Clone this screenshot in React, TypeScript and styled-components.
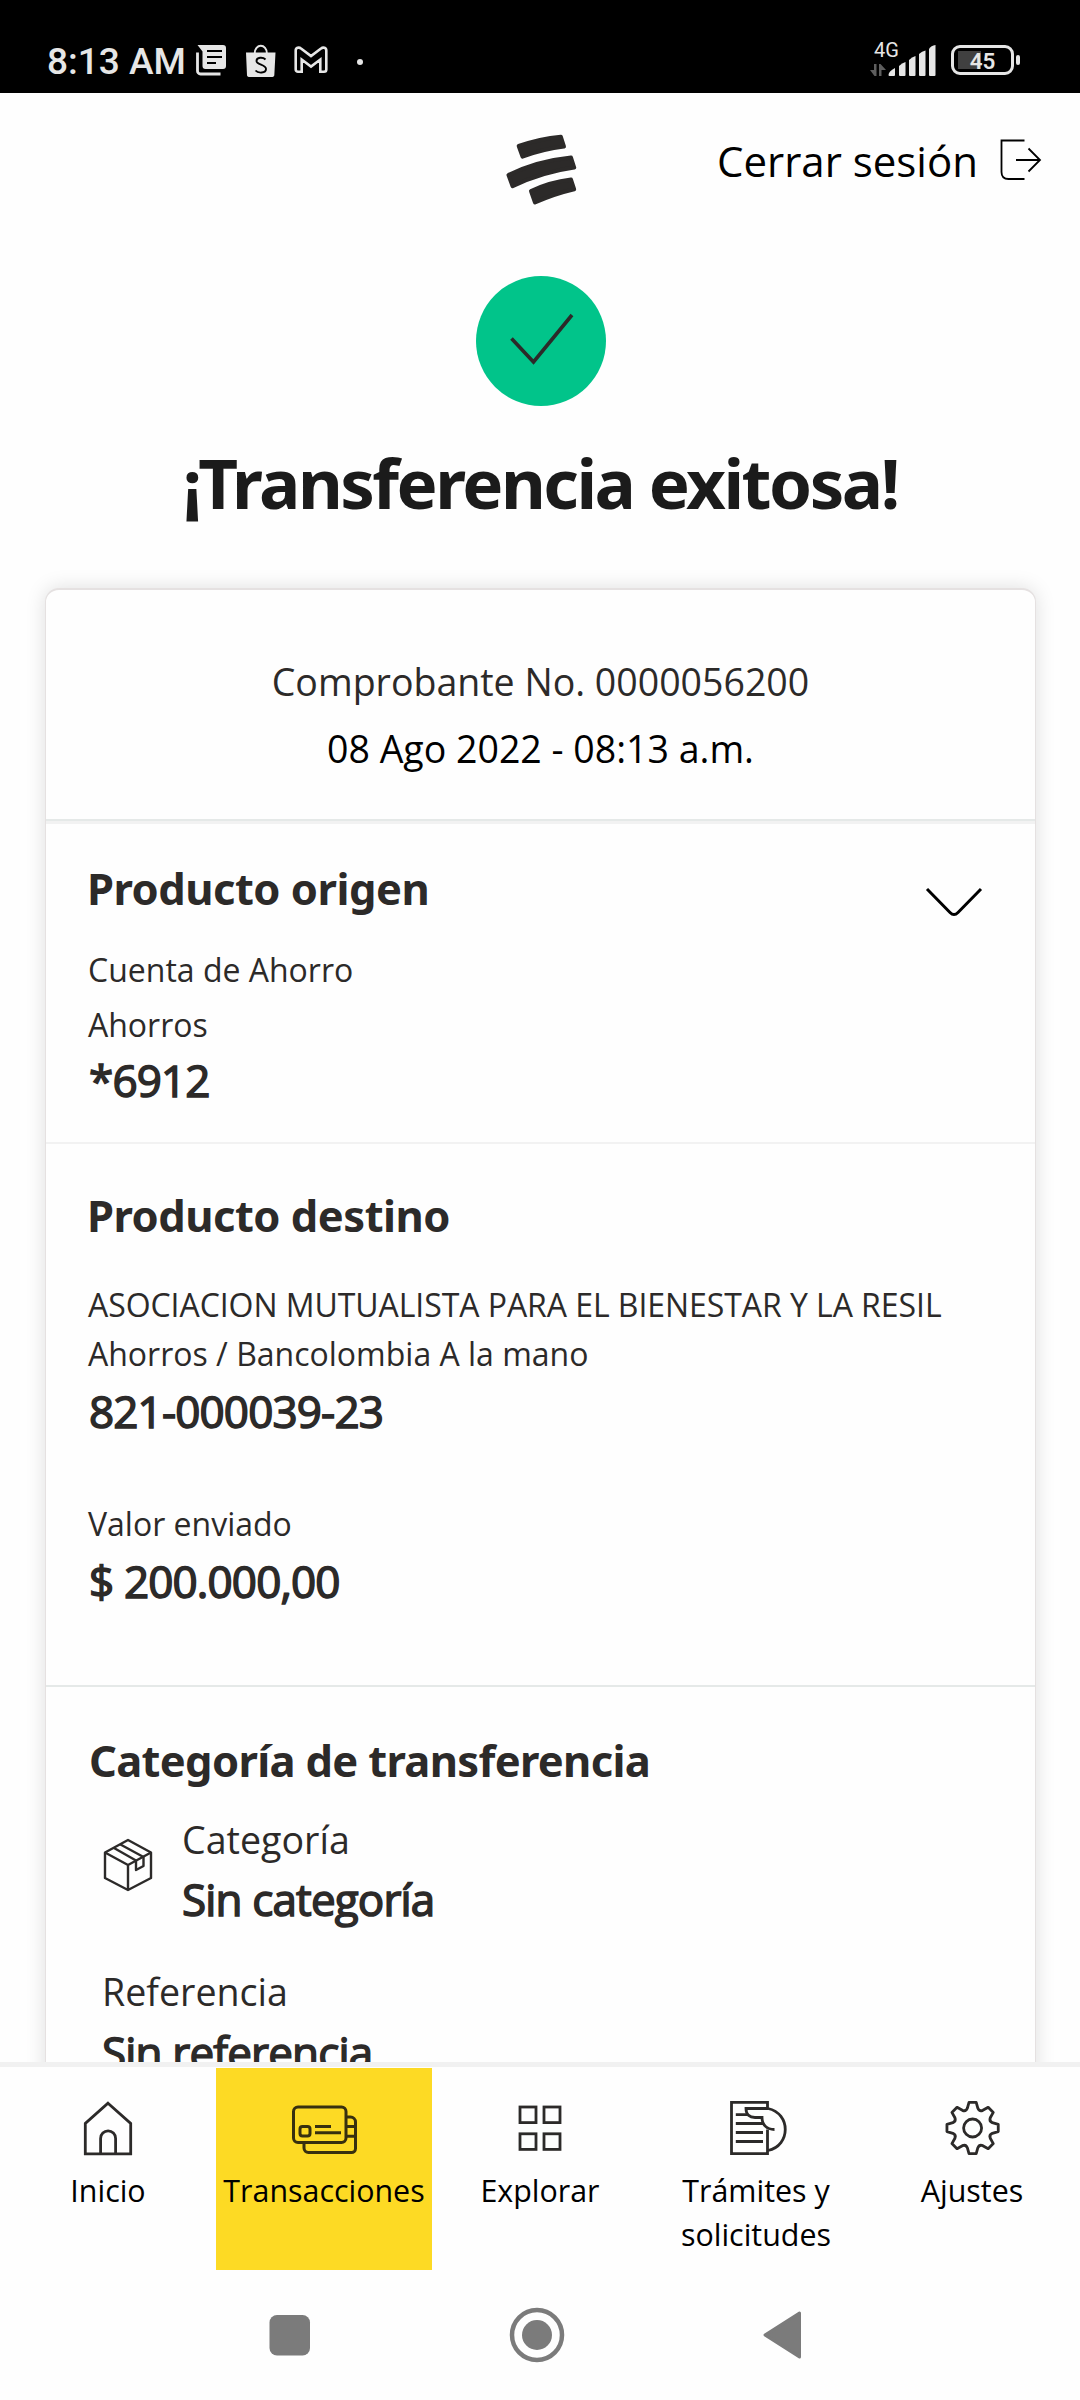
import React from "react";
import styled, { createGlobalStyle } from "styled-components";

const ink = "#2c2a29";
const statusInk = "#e6e6e6";

const GlobalStyle = createGlobalStyle`
  * { box-sizing: border-box; }
  body { margin: 0; background: #fefefe; }
`;

const Screen = styled.div`
  width: 1080px;
  height: 2400px;
  display: flex;
  flex-direction: column;
  overflow: hidden;
  background: #fefefe;
  color: ${ink};
  font-family: "Open Sans", "Noto Sans", sans-serif;
`;

/* Android status bar */
const StatusBar = styled.header`
  flex: none;
  height: 93px;
  padding: 0 60px 0 47px;
  display: flex;
  justify-content: space-between;
  background: #000;
  color: ${statusInk};
  font-family: Roboto, sans-serif;
`;

const StatusGroup = styled.div`
  display: flex;
  align-items: flex-start;
`;

const Clock = styled.span`
  width: 148px;
  margin-top: 40px;
  font-size: 37px;
  line-height: 44px;
  font-weight: 500;
  white-space: nowrap;
`;

const StatusIcon = styled.svg<{ $w: number; $h: number; $top: number; $left?: number }>`
  flex: none;
  display: block;
  width: ${(p) => p.$w}px;
  height: ${(p) => p.$h}px;
  margin: ${(p) => p.$top}px 0 0 ${(p) => p.$left ?? 0}px;
`;

const Network = styled.div`
  width: 34px;
  margin-top: 38px;
  display: flex;
  flex-direction: column;
`;

const NetworkLabel = styled.span`
  align-self: flex-start;
  margin-left: 4px;
  font-size: 20px;
  line-height: 24px;
`;

const Battery = styled.div`
  display: flex;
  align-items: center;
  gap: 2px;
  margin: 45px 0 0 14px;
`;

const BatteryBody = styled.div`
  width: 63px;
  height: 30px;
  border: 3px solid ${statusInk};
  border-radius: 9px;
  display: flex;
  align-items: center;
  justify-content: center;
  background: linear-gradient(#404040, #404040) 4px 3px / 23px 18px no-repeat;
  font-size: 22.5px;
  line-height: 24px;
  padding-top: 2px;
  font-weight: 600;
`;

const BatteryTip = styled.div`
  width: 4px;
  height: 10px;
  border-radius: 2px;
  background: ${statusInk};
`;

/* App header */
const Header = styled.div`
  flex: none;
  height: 150px;
  display: grid;
  grid-template-columns: 1fr 72px 1fr;
  align-items: start;
`;

const Logo = styled.svg`
  grid-column: 2;
  width: 72px;
  height: 72px;
  margin: 41px 0 0 2px;
`;

const Logout = styled.button`
  justify-self: end;
  display: flex;
  align-items: flex-start;
  gap: 22px;
  margin: 39px 38px 0 0;
  padding: 0;
  border: 0;
  background: none;
  color: #000;
  font: 42px/58px "Open Sans", sans-serif;
  white-space: nowrap;
`;

const LogoutIcon = styled.svg`
  width: 42px;
  height: 42px;
  margin-top: 7px;
`;

const Content = styled.main`
  flex: none;
  height: 1819px;
  overflow: hidden;
`;

const Hero = styled.section`
  display: flex;
  flex-direction: column;
  align-items: center;
  padding: 33px 0 61px;
`;

const SuccessBadge = styled.div`
  width: 130px;
  height: 130px;
  margin-left: 2px;
  border-radius: 50%;
  background: #01c48a;
`;

const HeroTitle = styled.h1`
  margin: 31px 0 0;
  color: #1b1b1b;
  font: 700 69px/90px "Noto Sans", sans-serif;
  letter-spacing: -2.5px;
  white-space: nowrap;
`;

/* Receipt */
const Card = styled.article`
  width: 991px;
  height: 1600px;
  margin-left: 45px;
  border: 1px solid #e5e1e1;
  border-top-width: 2px;
  border-radius: 14px;
  background: #fefefe;
  box-shadow: 0 0 20px rgba(0, 0, 0, 0.13);
`;

const CardHeader = styled.div`
  height: 231px;
  padding-top: 58px;
  border-bottom: 2px solid #e5e9e8;
  text-align: center;
  font-size: 37.5px;
  line-height: 67px;
`;

const ReceiptDate = styled.div`
  color: #000;
`;

const Section = styled.section<{ $top: number; $h: number; $line?: string }>`
  height: ${(p) => p.$h}px;
  padding: ${(p) => p.$top}px 42px 0;
  border-bottom: 2px solid ${(p) => p.$line ?? "transparent"};
`;

const OriginSection = styled(Section)`
  border-top: 3px solid #f2f2f2;
`;

const SectionHead = styled.div`
  display: flex;
  justify-content: space-between;
`;

const SectionTitle = styled.h2<{ $track?: number; $indent?: number }>`
  margin: 0 0 0 ${(p) => p.$indent ?? -1}px;
  font: 700 43.5px/60px "Noto Sans", sans-serif;
  letter-spacing: ${(p) => p.$track ?? -0.5}px;
  white-space: nowrap;
`;

const Chevron = styled.svg`
  width: 60px;
  height: 34px;
  margin: 27px 10px 0 0;
`;

const Detail = styled.div<{ $lh?: number; $mt?: number; $track?: number }>`
  margin-top: ${(p) => p.$mt ?? 0}px;
  font-size: 32px;
  line-height: ${(p) => p.$lh ?? 55}px;
  letter-spacing: ${(p) => p.$track ?? 0}px;
  white-space: nowrap;
`;

const Value = styled.div<{ $mt?: number }>`
  margin-top: ${(p) => p.$mt ?? 0}px;
  padding-left: 1px;
  font-size: 44px;
  line-height: 58px;
  letter-spacing: -0.85px;
  -webkit-text-stroke: 1.5px ${ink};
  white-space: nowrap;
`;

const FieldLabel = styled.div`
  padding-left: 1px;
  font-size: 37.6px;
  line-height: 60px;
`;

const CategoryRow = styled.div`
  display: flex;
  gap: 28px;
  margin: 20px 0 34px;
  padding-left: 15px;
`;

const BoxIcon = styled.svg`
  width: 50px;
  height: 54px;
  margin-top: 28px;
`;

const ReferenceField = styled.div`
  padding-left: 13px;
`;

/* Tab bar */
const TabBar = styled.nav`
  flex: none;
  height: 208px;
  display: grid;
  grid-template-columns: repeat(5, 216px);
  border-top: 5px solid #f1f1f1;
  padding-top: 1px;
`;

const Tab = styled.a<{ $active?: boolean }>`
  display: flex;
  flex-direction: column;
  align-items: center;
  padding-top: 32px;
  background: ${(p) => (p.$active ? "#fdda24" : "transparent")};
  color: #000;
  font-size: 30.4px;
  line-height: 44px;
  text-align: center;
`;

const TabIcon = styled.svg`
  width: 72px;
  height: 56px;
  margin-bottom: 13px;
  fill: none;
  stroke: ${ink};
  stroke-width: 2.8;
`;

const SystemNav = styled.footer`
  flex: none;
  height: 130px;
  display: grid;
  grid-template-columns: 42px 56px 40px;
  column-gap: 198px;
  align-items: center;
  padding-left: 269px;
`;

const SystemIcon = styled.svg`
  width: 100%;
  height: 56px;
  fill: #7b7b7b;
`;

function gearPath(cx: number, cy: number) {
  const at = (r: number, deg: number) => {
    const a = (deg * Math.PI) / 180;
    return `${(cx + r * Math.sin(a)).toFixed(2)} ${(cy - r * Math.cos(a)).toFixed(2)}`;
  };
  let d = "";
  for (let k = 0; k < 8; k++) {
    const a = k * 45;
    d += `${k ? "L" : "M"}${at(25.9, a - 8)} L${at(25.9, a + 8)} L${at(20.4, a + 15)} Q${at(17.6, a + 22.5)} ${at(20.4, a + 30)} `;
  }
  return d + "Z";
}

const tabs = [
  {
    label: "Inicio",
    icon: (
      <>
        <path d="M36 3.2 58.7 23.5V53.8H13.3V23.5Z" />
        <path d="M28.6 53.8V38.4a7.5 7.5 0 0 1 15 0V53.8" />
      </>
    ),
  },
  {
    label: "Transacciones",
    active: true,
    icon: (
      <g stroke="#38300f" strokeWidth="3">
        <rect x="5.5" y="7" width="52.5" height="35.5" rx="4.5" />
        <path d="M58 17h4.5a5 5 0 0 1 5 5v26.5a4 4 0 0 1-4 4H20.5a4.5 4.5 0 0 1-4.5-4.5V43" />
        <path d="M58 26.5h9M58 36.3h9" />
        <rect x="12" y="26.4" width="10" height="9.7" rx="2.5" />
        <path d="M27 26.5h16M27 32.7h26" />
      </g>
    ),
  },
  {
    label: "Explorar",
    icon: (
      <>
        <rect x="16" y="7" width="16" height="15.6" />
        <rect x="40" y="7" width="16" height="15.6" />
        <rect x="16" y="33.8" width="16" height="15.6" />
        <rect x="40" y="33.8" width="16" height="15.6" />
      </>
    ),
  },
  {
    label: "Trámites y solicitudes",
    icon: (
      <>
        <path d="M47.5 8.5V2.4H11.5V53.6H47.5V29.5" />
        <path d="M15.8 14.6h12M15.8 23.5h28M15.8 32.5h27.2M15.8 41.5h27.2" />
        <path d="M48 8.5H26c0 6 3.500 9 9 9h7c0 7 4.500 12 12.500 12" />
        <path d="M48 8.5c23 5 23 37 0 42" />
      </>
    ),
  },
  {
    label: "Ajustes",
    icon: (
      <>
        <path d={gearPath(36.6, 28)} strokeLinejoin="round" />
        <circle cx="36.6" cy="28" r="9" />
      </>
    ),
  },
];

export default function App() {
  return (
    <Screen>
      <GlobalStyle />
      <StatusBar>
        <StatusGroup>
          <Clock>8:13 AM</Clock>
          <StatusIcon $w={31} $h={31} $top={45} $left={1} viewBox="0 0 31 31">
            <path
              fill={statusInk}
              d="M1.5 0H27a3 3 0 0 1 3 3V21a3 3 0 0 1-3 3H9.5a3 3 0 0 1-3-3V6.5Z"
            />
            <path d="M11 6h15M11 12h15M11 18h9" stroke="#000" strokeWidth="2.2" />
            <path d="M1.5 7.5V26a3 3 0 0 0 3 3H24.5" fill="none" stroke={statusInk} strokeWidth="2.8" />
          </StatusIcon>
          <StatusIcon $w={31} $h={33} $top={44} $left={18} viewBox="0 0 31 33" fill="none">
            <path d="M1 8.500H30.500L29.300 31.500a2 2 0 0 1-2 1.500H4a2 2 0 0 1-2-1.500Z" fill={statusInk} />
            <path d="M9.800 9a6 7.200 0 0 1 12 0" stroke={statusInk} strokeWidth="1.900" />
            <path
              d="M20.500 15.500c-2.500-2.500-9-2.500-9 1.500s9.500 3.500 9.500 8-8 4.500-10.500 1.500"
              stroke="#000"
              strokeWidth="1.9"
            />
          </StatusIcon>
          <StatusIcon $w={34} $h={28} $top={46} $left={18} viewBox="0 0 34 28">
            <path
              d="M1.700 4.500v19a2.300 2.300 0 0 0 2.300 2.300h3.700V13.500L17 20.500l9.300-7V25.800H30a2.300 2.300 0 0 0 2.300-2.300v-19C32.300 1.500 29 .9 27 2.500L17 10 7 2.500C5 .9 1.700 1.500 1.700 4.500Z"
              fill="none"
              stroke={statusInk}
              strokeWidth="2.6"
            />
          </StatusIcon>
          <StatusIcon $w={6} $h={6} $top={59} $left={29} viewBox="0 0 6 6">
            <circle cx="3" cy="3" r="3" fill={statusInk} />
          </StatusIcon>
        </StatusGroup>
        <StatusGroup>
          <Network>
            <NetworkLabel>4G</NetworkLabel>
            <StatusIcon $w={17} $h={12} $top={2} viewBox="0 0 17 12" fill="#5e5e5e">
              <path d="M4 0h2.500v12H4.500L0 6h4ZM9 12h2.500V6H16L10.500 0H9Z" />
            </StatusIcon>
          </Network>
          <StatusIcon $w={49} $h={31} $top={45} $left={-16} viewBox="0 0 49 31" fill={statusInk}>
            <path d="M.5 30q0-3.500 6.500-7v7q0 1-1 1H1.500q-1 0-1-1Z" />
            <path d="M11 21q3-3 6.500-4v13q0 1-1 1H12q-1 0-1-1Z" />
            <path d="M21 15q3-3 6.500-4v19q0 1-1 1H22q-1 0-1-1Z" />
            <path d="M31 9q3-3 6.500-3.500V30q0 1-1 1H32q-1 0-1-1Z" />
            <path d="M41 4q2-3.500 6.500-4V30q0 1-1 1H42q-1 0-1-1Z" />
          </StatusIcon>
          <Battery>
            <BatteryBody>45</BatteryBody>
            <BatteryTip />
          </Battery>
        </StatusGroup>
      </StatusBar>

      <Header>
        <Logo viewBox="0 0 72 72" fill={ink} stroke={ink} strokeWidth="4" strokeLinejoin="round">
          <path d="M12.700 12Q34 4.500 54.800 2.700L58 12.600Q38 15 16.500 22.600Z" />
          <path d="M2.500 41Q30.700 27 65 23.500L68.200 33.500Q36 38 6.600 52.200Z" />
          <path d="M25 57Q44 48 65 45.500L68.200 55.300Q48 60 29 68.500Z" />
        </Logo>
        <Logout>
          Cerrar sesión
          <LogoutIcon viewBox="0 0 42 42" fill="none" stroke="#000" strokeWidth="1.8">
            <path d="M24.500 1.500H1.500V33q0 7 7 7H24.500" />
            <path d="M16 21H40M28.500 9.500 40 21 28.500 32.500" />
          </LogoutIcon>
        </Logout>
      </Header>

      <Content>
        <Hero>
          <SuccessBadge>
            <svg width="130" height="130" viewBox="0 0 130 130" fill="none" stroke={ink} strokeWidth="3.600">
              <path d="M35.500 62.500 57.500 86 96 39" />
            </svg>
          </SuccessBadge>
          <HeroTitle>¡Transferencia exitosa!</HeroTitle>
        </Hero>

        <Card>
          <CardHeader>
            <div>Comprobante No. 0000056200</div>
            <ReceiptDate>08 Ago 2022 - 08:13 a.m.</ReceiptDate>
          </CardHeader>

          <OriginSection $top={34} $h={323} $line="#f2f2f2">
            <SectionHead>
              <SectionTitle>Producto origen</SectionTitle>
              <Chevron viewBox="0 0 60 34" fill="none" stroke="#000" strokeWidth="3">
                <path d="M4 4 27 27.500Q31 31.500 35 27.500L58 4" />
              </Chevron>
            </SectionHead>
            <Detail $mt={23}>Cuenta de Ahorro</Detail>
            <Detail>Ahorros</Detail>
            <Value $mt={-1}>*6912</Value>
          </OriginSection>

          <Section $top={41} $h={543} $line="#e5e9e8">
            <SectionTitle>Producto destino</SectionTitle>
            <Detail $mt={35} $lh={49} $track={-0.06}>
              ASOCIACION MUTUALISTA PARA EL BIENESTAR Y LA RESIL
            </Detail>
            <Detail $lh={49}>Ahorros / Bancolombia A la mano</Detail>
            <Value $mt={4}>821-000039-23</Value>
            <Detail $mt={56}>Valor enviado</Detail>
            <Value $mt={1}>$ 200.000,00</Value>
          </Section>

          <Section $top={43} $h={420}>
            <SectionTitle $indent={1} $track={-0.68}>
              Categoría de transferencia
            </SectionTitle>
            <CategoryRow>
              <BoxIcon viewBox="0 0 50 54" fill="none" stroke={ink} strokeWidth="2.4" strokeLinejoin="round">
                <path d="M25 2 48 14.500V40L25 52 2 40V14.500Z" />
                <path d="M2 14.500 25 27 48 14.500M25 27V52" />
                <path d="M17.500 6.500 40.500 19M11 10 33 22.500M33 22.500V32L40.500 28V19" />
              </BoxIcon>
              <div>
                <FieldLabel>Categoría</FieldLabel>
                <Value>Sin categoría</Value>
              </div>
            </CategoryRow>
            <ReferenceField>
              <FieldLabel>Referencia</FieldLabel>
              <Value $mt={1}>Sin referencia</Value>
            </ReferenceField>
          </Section>
        </Card>
      </Content>

      <TabBar>
        {tabs.map((tab) => (
          <Tab key={tab.label} $active={tab.active}>
            <TabIcon viewBox="0 0 72 56">{tab.icon}</TabIcon>
            {tab.label}
          </Tab>
        ))}
      </TabBar>

      <SystemNav>
        <SystemIcon viewBox="0 0 42 56">
          <rect x="0.5" y="8" width="40.5" height="40.5" rx="7.5" />
        </SystemIcon>
        <SystemIcon viewBox="0 0 56 56">
          <circle cx="28" cy="28" r="25" fill="none" stroke="#7b7b7b" strokeWidth="4.5" />
          <circle cx="28" cy="28" r="15" />
        </SystemIcon>
        <SystemIcon viewBox="0 0 40 56">
          <path
            d="M2 28 36.500 6V50Z"
            stroke="#7b7b7b"
            strokeWidth="3"
            strokeLinejoin="round"
          />
        </SystemIcon>
      </SystemNav>
    </Screen>
  );
}
